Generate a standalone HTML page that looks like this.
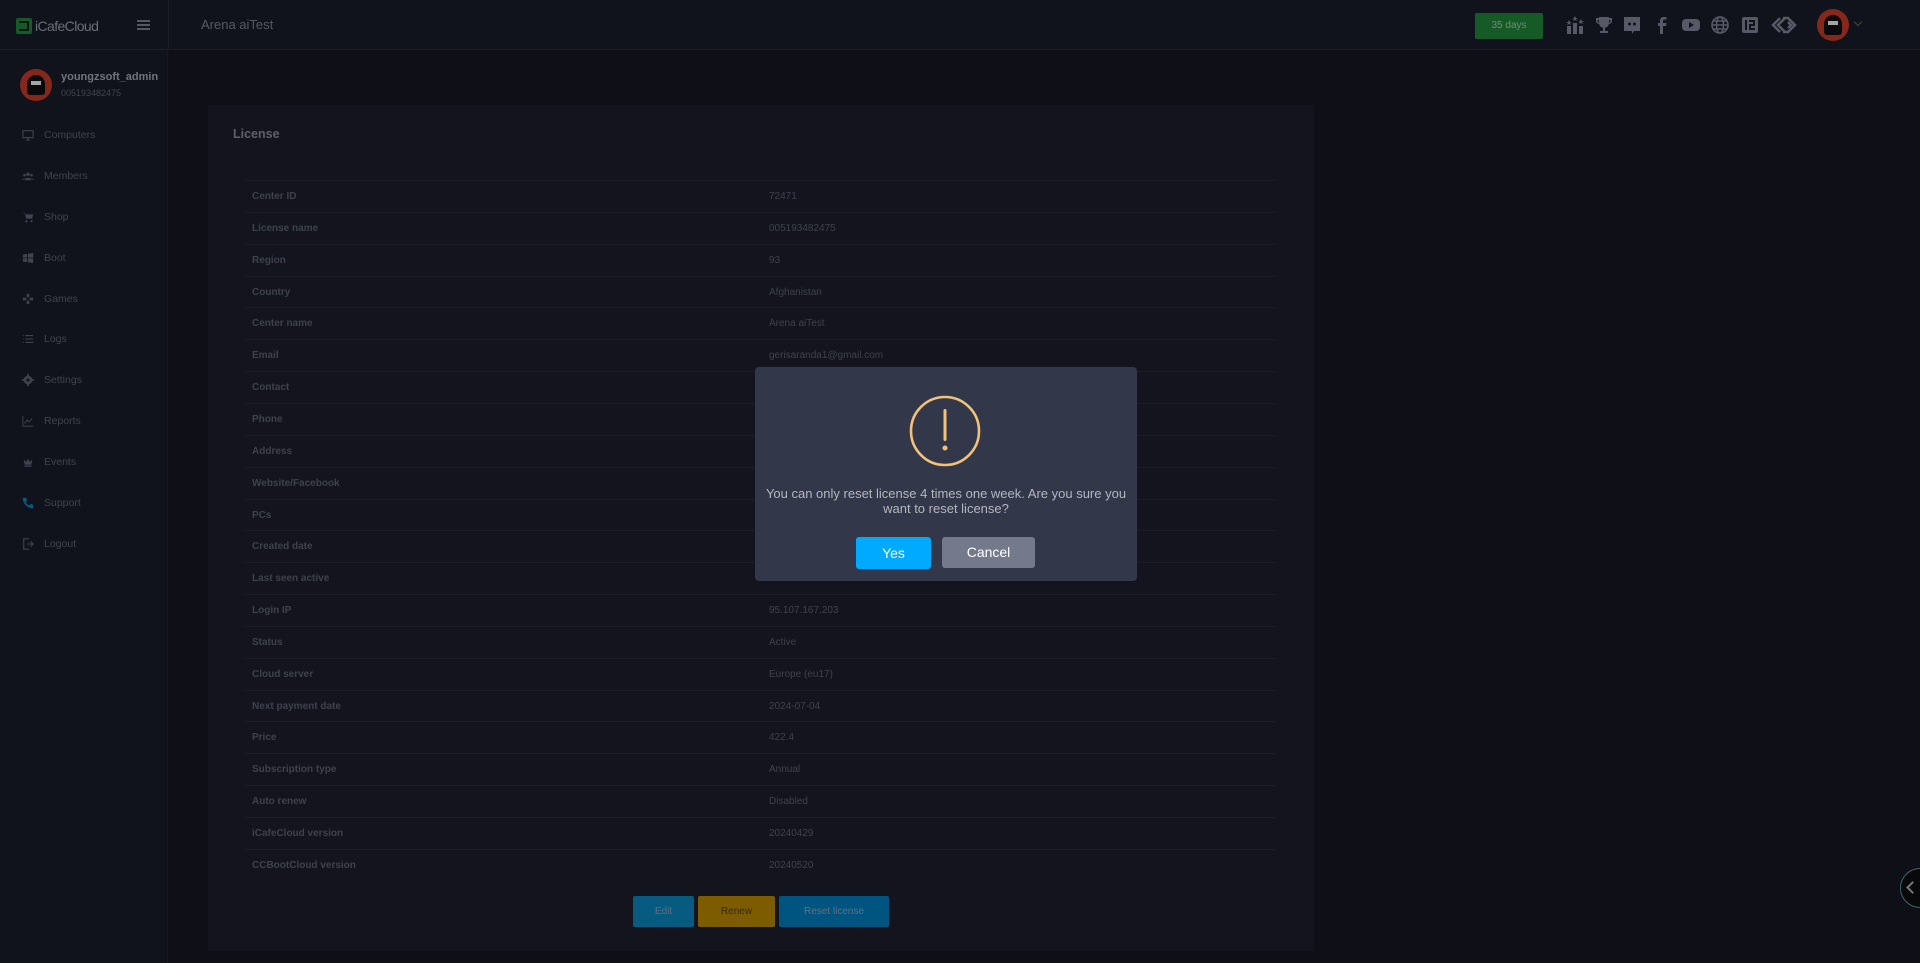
<!DOCTYPE html>
<html><head><meta charset="utf-8"><style>
*{margin:0;padding:0;box-sizing:border-box}
body{width:1920px;height:963px;background:#0f1017;font-family:"Liberation Sans",sans-serif;position:relative;overflow:hidden;color:#444852}
.hdr{position:absolute;left:0;top:0;width:1920px;height:50px;background:#11131c;border-bottom:1px solid #1a1c28}
.side{position:absolute;left:0;top:50px;width:168px;height:913px;background:#11131c;border-right:1px solid #161823}
.a{position:absolute}
.nav{position:absolute;left:22px;font-size:10.5px;color:#3f434e;display:flex;align-items:center}
.nav svg{width:12px;height:12px;margin-right:10px}
.card{position:absolute;left:208px;top:105px;width:1106px;height:846px;background:#13141e}
.row{position:absolute;left:244px;width:1033px;height:32px;border-top:1px solid #1a1c28;font-size:10px}
.row b{position:absolute;left:8px;top:10px;color:#3e424c}
.row span{position:absolute;left:525px;top:10px;color:#3e424c}
.btn{position:absolute;top:896px;height:31px;border-radius:2px;font-size:10px;color:#62707c;display:flex;align-items:center;justify-content:center}
.ic{position:absolute;top:15px;width:20px;height:20px}
</style></head><body>
<div class="hdr"></div>
<div class="a" style="left:168px;top:0;width:1px;height:50px;background:#1a1c28"></div>
<div class="side"></div>
<div class="a" style="left:16px;top:18px;width:16px;height:16px;background:#165a2b;border-radius:2px"></div>
<div class="a" style="left:19px;top:21px;width:10px;height:10px;border:2px solid #0b140e;border-left:none"></div>
<div class="a" style="left:35px;top:18px;font-size:14px;color:#6a6d76;letter-spacing:-0.6px">iCafeCloud</div>
<div class="a" style="left:137px;top:20px;width:13px;height:2px;background:#555863;box-shadow:0 4px 0 #555863,0 8px 0 #555863"></div>
<div class="a" style="left:201px;top:17px;font-size:13px;color:#555863">Arena aiTest</div>
<div class="a" style="left:1475px;top:13px;width:68px;height:26px;background:#165a27;border-radius:2px;color:#6c8f76;font-size:10px;text-align:center;line-height:26px">35 days</div>
<svg class="ic" style="left:1565px" viewBox="0 0 20 20" fill="#555a66"><rect x="2" y="11" width="4" height="8"/><rect x="8" y="8" width="4" height="11"/><rect x="14" y="11" width="4" height="8"/><path d="M4 5l1 2h2l-2 1 1 2-2-1-2 1 1-2-2-1h2zM10 1l1 2h2l-2 1 1 2-2-1-2 1 1-2-2-1h2zM16 4l1 2h2l-2 1 1 2-2-1-2 1 1-2-2-1h2z"/></svg>
<svg class="ic" style="left:1594px" viewBox="0 0 20 20" fill="#555a66"><path d="M5 2h10v6a5 5 0 0 1-10 0zM2 3h3v2H4a2 2 0 0 0 1 3v1a3 3 0 0 1-3-3zM18 3h-3v2h1a2 2 0 0 1-1 3v1a3 3 0 0 0 3-3zM9 13h2v3h3v2H6v-2h3z"/></svg>
<svg class="ic" style="left:1622px" viewBox="0 0 20 20" fill="#555a66"><path d="M2 2h16v14h-6l-2 3v-3H2z"/><circle cx="7.5" cy="9" r="1.5" fill="#11131c"/><circle cx="12.5" cy="9" r="1.5" fill="#11131c"/></svg>
<svg class="ic" style="left:1652px" viewBox="0 0 20 20" fill="#555a66"><path d="M11 19v-8h3l.5-3H11V6c0-1 .5-1.5 1.5-1.5H14.5V2h-3C9 2 8 3.5 8 6v2H6v3h2v8z"/></svg>
<svg class="ic" style="left:1681px" viewBox="0 0 20 20" fill="#555a66"><rect x="1" y="4" width="18" height="12" rx="4"/><path d="M8 7l5 3-5 3z" fill="#11131c"/></svg>
<svg class="ic" style="left:1710px" viewBox="0 0 20 20" fill="none" stroke="#555a66" stroke-width="1.6"><circle cx="10" cy="10" r="8"/><ellipse cx="10" cy="10" rx="3.5" ry="8"/><path d="M2 10h16M3.5 6h13M3.5 14h13"/></svg>
<svg class="ic" style="left:1740px" viewBox="0 0 20 20" fill="#555a66"><rect x="2" y="2" width="16" height="16" rx="2"/><path d="M5 5h2v10H5zM9 5h6v6h-4v2h4v2H9v-6h4V7H9z" fill="#11131c"/></svg>
<svg class="ic" style="left:1771px;width:26px" viewBox="0 0 26 20" fill="none" stroke="#555a66" stroke-width="2.5"><path d="M9 3L2 10l7 7M14 3l-7 7 7 7M12 3h5l7 7-7 7h-5M17 7l3 3-3 3"/></svg>
<div class="a" style="left:1817px;top:9px;width:32px;height:32px;border-radius:50%;background:#86271b"></div>
<div class="a" style="left:1824px;top:15px;width:18px;height:20px;border-radius:9px 9px 3px 3px;background:#0a0a0c"></div>
<div class="a" style="left:1828px;top:21px;width:10px;height:4px;background:#a5a5a5"></div>
<div class="a" style="left:1855px;top:19px;width:6px;height:6px;border-right:1px solid #444;border-bottom:1px solid #444;transform:rotate(45deg)"></div>
<div class="a" style="left:20px;top:69px;width:32px;height:32px;border-radius:50%;background:#86271b"></div>
<div class="a" style="left:27px;top:75px;width:18px;height:20px;border-radius:9px 9px 3px 3px;background:#0a0a0c"></div>
<div class="a" style="left:31px;top:81px;width:10px;height:4px;background:#a5a5a5"></div>
<div class="a" style="left:61px;top:71px;font-size:11px;font-weight:bold;color:#71747d">youngzsoft_admin</div>
<div class="a" style="left:61px;top:88px;font-size:9px;color:#3f434e">005193482475</div>
<div class="nav" style="top:129px"><svg viewBox="0 0 14 14" fill="none" stroke="#3f434e" stroke-width="1.3"><rect x="1" y="2" width="12" height="8"/><path d="M5 13h4M7 10v3"/></svg>Computers</div>
<div class="nav" style="top:170px"><svg viewBox="0 0 14 14" fill="#3f434e"><circle cx="7" cy="5" r="2"/><circle cx="3" cy="6" r="1.5"/><circle cx="11" cy="6" r="1.5"/><path d="M3 12a4 3 0 0 1 8 0zM0 12a3 2 0 0 1 4-2M14 12a3 2 0 0 0-4-2"/></svg>Members</div>
<div class="nav" style="top:211px"><svg viewBox="0 0 14 14" fill="#3f434e"><path d="M1 2h2l2 7h7l1-5H4"/><circle cx="5" cy="12" r="1.3"/><circle cx="11" cy="12" r="1.3"/></svg>Shop</div>
<div class="nav" style="top:252px"><svg viewBox="0 0 14 14" fill="#3f434e"><path d="M1 3l5-1v4.5H1zM7 2l6-1v5.5H7zM1 7.5h5V12l-5-1zM7 7.5h6V13l-6-1z"/></svg>Boot</div>
<div class="nav" style="top:293px"><svg viewBox="0 0 14 14" fill="#3f434e"><rect x="5.5" y="1" width="3" height="4"/><rect x="5.5" y="9" width="3" height="4"/><rect x="1" y="5.5" width="4" height="3"/><rect x="9" y="5.5" width="4" height="3"/></svg>Games</div>
<div class="nav" style="top:333px"><svg viewBox="0 0 14 14" fill="none" stroke="#3f434e" stroke-width="1.2"><path d="M4 3h9M4 7h9M4 11h9M1 3h1M1 7h1M1 11h1"/></svg>Logs</div>
<div class="nav" style="top:374px"><svg viewBox="0 0 14 14" fill="#3f434e"><circle cx="7" cy="7" r="5"/><path d="M6 0h2v14H6zM0 6h14v2H0z"/><circle cx="7" cy="7" r="1.8" fill="#11131c"/></svg>Settings</div>
<div class="nav" style="top:415px"><svg viewBox="0 0 14 14" fill="none" stroke="#3f434e" stroke-width="1.1"><path d="M1 1v12h12M3 10l3-4 2 2 4-4"/></svg>Reports</div>
<div class="nav" style="top:456px"><svg viewBox="0 0 14 14" fill="#3f434e"><path d="M2 4l3 3 2-4 2 4 3-3-1 6H3zM3 11h8v1.5H3z"/></svg>Events</div>
<div class="nav" style="top:497px"><svg viewBox="0 0 14 14" fill="#0b5884"><path d="M2 1h3l1 3-2 1.5c1 2 2.5 3.5 4.5 4.5L10 8l3 1v3c0 1-1 1.5-2 1.3C6 12 2 8 1 3 .8 2 1.2 1 2 1z"/></svg>Support</div>
<div class="nav" style="top:538px"><svg viewBox="0 0 14 14" fill="none" stroke="#3f434e" stroke-width="1.3"><path d="M8 1H2v12h6M6 7h7M10 4l3 3-3 3"/></svg>Logout</div>
<div class="card"></div>
<div class="a" style="left:233px;top:127px;font-size:12.5px;font-weight:bold;color:#5c606a">License</div>
<div class="row" style="top:180px"><b>Center ID</b><span>72471</span></div>
<div class="row" style="top:212px"><b>License name</b><span>005193482475</span></div>
<div class="row" style="top:244px"><b>Region</b><span>93</span></div>
<div class="row" style="top:276px"><b>Country</b><span>Afghanistan</span></div>
<div class="row" style="top:307px"><b>Center name</b><span>Arena aiTest</span></div>
<div class="row" style="top:339px"><b>Email</b><span>gerisaranda1@gmail.com</span></div>
<div class="row" style="top:371px"><b>Contact</b><span></span></div>
<div class="row" style="top:403px"><b>Phone</b><span></span></div>
<div class="row" style="top:435px"><b>Address</b><span></span></div>
<div class="row" style="top:467px"><b>Website/Facebook</b><span></span></div>
<div class="row" style="top:499px"><b>PCs</b><span></span></div>
<div class="row" style="top:530px"><b>Created date</b><span></span></div>
<div class="row" style="top:562px"><b>Last seen active</b><span></span></div>
<div class="row" style="top:594px"><b>Login IP</b><span>95.107.167.203</span></div>
<div class="row" style="top:626px"><b>Status</b><span>Active</span></div>
<div class="row" style="top:658px"><b>Cloud server</b><span>Europe (eu17)</span></div>
<div class="row" style="top:690px"><b>Next payment date</b><span>2024-07-04</span></div>
<div class="row" style="top:721px"><b>Price</b><span>422.4</span></div>
<div class="row" style="top:753px"><b>Subscription type</b><span>Annual</span></div>
<div class="row" style="top:785px"><b>Auto renew</b><span>Disabled</span></div>
<div class="row" style="top:817px"><b>iCafeCloud version</b><span>20240429</span></div>
<div class="row" style="top:849px"><b>CCBootCloud version</b><span>20240520</span></div>
<div class="btn" style="left:633px;width:61px;background:#075a80">Edit</div>
<div class="btn" style="left:698px;width:77px;background:#7d5c00;color:#33290f">Renew</div>
<div class="btn" style="left:779px;width:110px;background:#005580">Reset license</div>
<div class="a" style="left:1900px;top:868px;width:40px;height:40px;border-radius:50%;background:#09090c;border:1px solid #3d656e"></div>
<div class="a" style="left:1908px;top:883px;width:9px;height:9px;border-left:2px solid #777;border-bottom:2px solid #777;transform:rotate(45deg)"></div>
<div class="a" style="left:755px;top:367px;width:382px;height:214px;background:#32374a;border-radius:4px"></div>
<svg class="a" style="left:908px;top:394px" width="74" height="74" viewBox="0 0 74 74"><circle cx="37" cy="37" r="34" fill="none" stroke="#f1c27a" stroke-width="2.6"/><rect x="35.5" y="15" width="3" height="32" rx="1.5" fill="#f1c27a"/><circle cx="37" cy="54" r="2.5" fill="#f1c27a"/></svg>
<div class="a" style="left:755px;top:486px;width:382px;text-align:center;font-size:13px;line-height:15px;color:#b5b7bf">You can only reset license 4 times one week. Are you sure you<br>want to reset license?</div>
<div class="a" style="left:856px;top:537px;width:75px;height:32px;background:#00aaff;border-radius:3px;color:#fff;font-size:14px;text-align:center;line-height:32px">Yes</div>
<div class="a" style="left:942px;top:537px;width:93px;height:31px;background:#747a8c;border-radius:3px;color:#fff;font-size:14px;text-align:center;line-height:31px">Cancel</div>
</body></html>
